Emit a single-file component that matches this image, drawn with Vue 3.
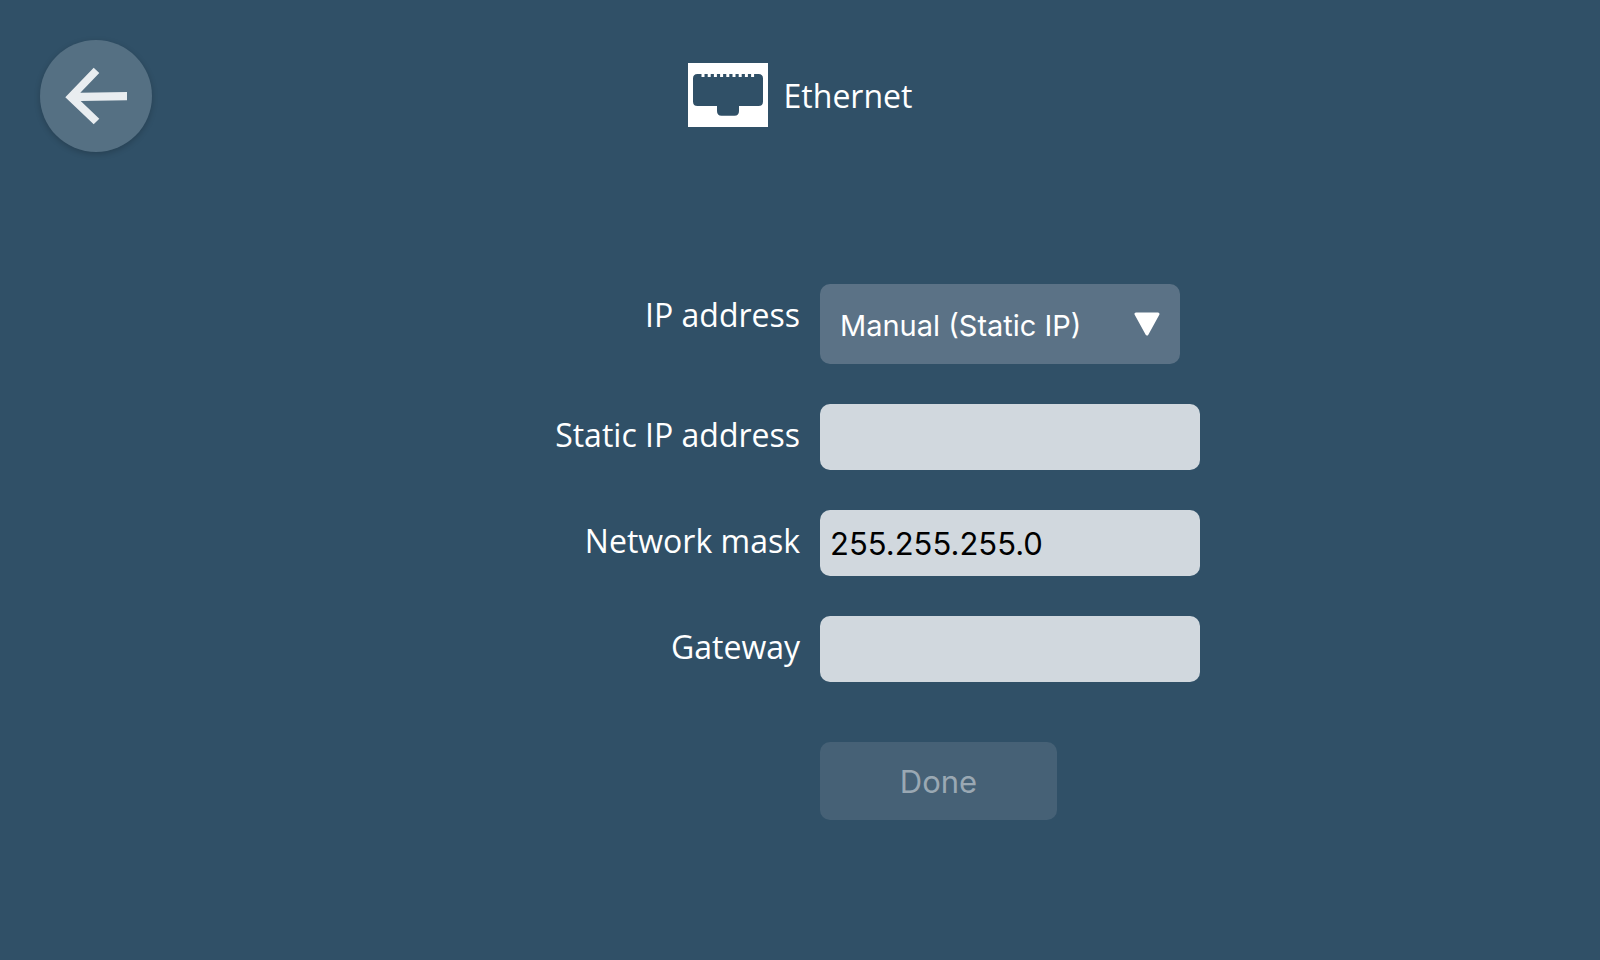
<script setup>
import { ref } from 'vue'

const mode = ref('static')
const staticIp = ref('')
const networkMask = ref('255.255.255.0')
const gateway = ref('')
</script>

<template>
  <main class="page">
    <header class="header">
      <button class="back" type="button" aria-label="Back">
        <svg viewBox="0 0 112 112" aria-hidden="true">
          <path d="M25.3 57.3 53.7 27.7 59.3 33 40.3 52.7 87 52V60.2L40.7 61 59.3 78.7 53.7 84.2Z" />
        </svg>
      </button>
      <h1 class="title">
        <svg class="port" viewBox="0 0 80 64" aria-hidden="true">
          <path
            fill-rule="evenodd"
            d="M0 0H80V64H0Z M9.5 11H13.5v3h3v-3h3.2v3h3v-3h3.2v3h3v-3h3.2v3h3v-3h3.2v3h3v-3h3.2v3h3v-3h3.2v3h3v-3h3.2v3h3v-3h3.2v3h3v-3H70.5Q75 11 75 15.5V38.5Q75 43 70.5 43H51V48Q51 52.7 46.5 52.7H33.5Q29 52.7 29 48V43H9.5Q5 43 5 38.5V15.5Q5 11 9.5 11Z"
          />
        </svg>
        <span>Ethernet</span>
      </h1>
    </header>

    <form class="form" @submit.prevent>
      <label for="mode">IP address</label>
      <div class="picker">
        <select id="mode" v-model="mode">
          <option value="dhcp">Automatic (DHCP)</option>
          <option value="static">Manual (Static IP)</option>
        </select>
        <svg class="caret" viewBox="0 0 26 24" aria-hidden="true">
          <path d="M2 2H24L13 22Z" />
        </svg>
      </div>

      <label for="static-ip">Static IP address</label>
      <input id="static-ip" v-model="staticIp" type="text" />

      <label for="mask">Network mask</label>
      <input id="mask" v-model="networkMask" type="text" />

      <label for="gateway">Gateway</label>
      <input id="gateway" v-model="gateway" type="text" />

      <button class="done" type="submit" disabled>Done</button>
    </form>
  </main>
</template>

<style>
body {
  margin: 0;
  background: #305067;
}
</style>

<style scoped>
.page {
  box-sizing: border-box;
  min-height: 100vh;
  padding: 40px;
  background: #305067;
  color: #fff;
  font-family: "Open Sans", sans-serif;
  font-size: 32px;
  line-height: 44px;
}

.header {
  display: grid;
  grid-template-columns: 1fr auto 1fr;
  align-items: center;
}

.back {
  width: 112px;
  height: 112px;
  padding: 0;
  border: 0;
  border-radius: 50%;
  background: #557083;
  box-shadow: 0 2px 6px rgba(0, 0, 0, 0.2);
}

.back svg {
  display: block;
  fill: #e9edf0;
}

.title {
  display: flex;
  align-items: flex-start;
  gap: 16px;
  margin: 0;
  font-size: 32px;
  font-weight: 400;
  line-height: 66px;
}

.port {
  width: 80px;
  height: 64px;
  fill: #fff;
}

.form {
  display: grid;
  grid-template-columns: 1fr 1fr;
  row-gap: 40px;
  align-items: start;
  margin-top: 132px;
}

label {
  padding-top: 9px;
  text-align: right;
}

.picker,
input,
.done {
  margin-left: 20px;
}

.picker {
  display: grid;
  align-items: center;
  width: 360px;
}

select {
  grid-area: 1 / 1;
  width: 100%;
  height: 80px;
  padding: 2px 60px 0 20px;
  border: 0;
  border-radius: 10px;
  appearance: none;
  background: #5b7286;
  color: #fff;
  font-family: Inter, sans-serif;
  font-size: 29px;
}

.caret {
  grid-area: 1 / 1;
  justify-self: end;
  width: 26px;
  height: 24px;
  margin-right: 20px;
  fill: #fff;
  stroke: #fff;
  stroke-width: 3px;
  stroke-linejoin: round;
  pointer-events: none;
}

input {
  box-sizing: border-box;
  width: 380px;
  height: 66px;
  padding: 0 10px;
  border: 0;
  border-radius: 10px;
  background: #d1d8de;
  color: #000;
  font-family: Inter, sans-serif;
  font-size: 31px;
}

.done {
  grid-column: 2;
  width: 237px;
  height: 78px;
  margin-top: 20px;
  padding: 0;
  border: 0;
  border-radius: 10px;
  background: #466176;
  color: #9aa8b3;
  font-family: Inter, sans-serif;
  font-size: 31px;
}
</style>
